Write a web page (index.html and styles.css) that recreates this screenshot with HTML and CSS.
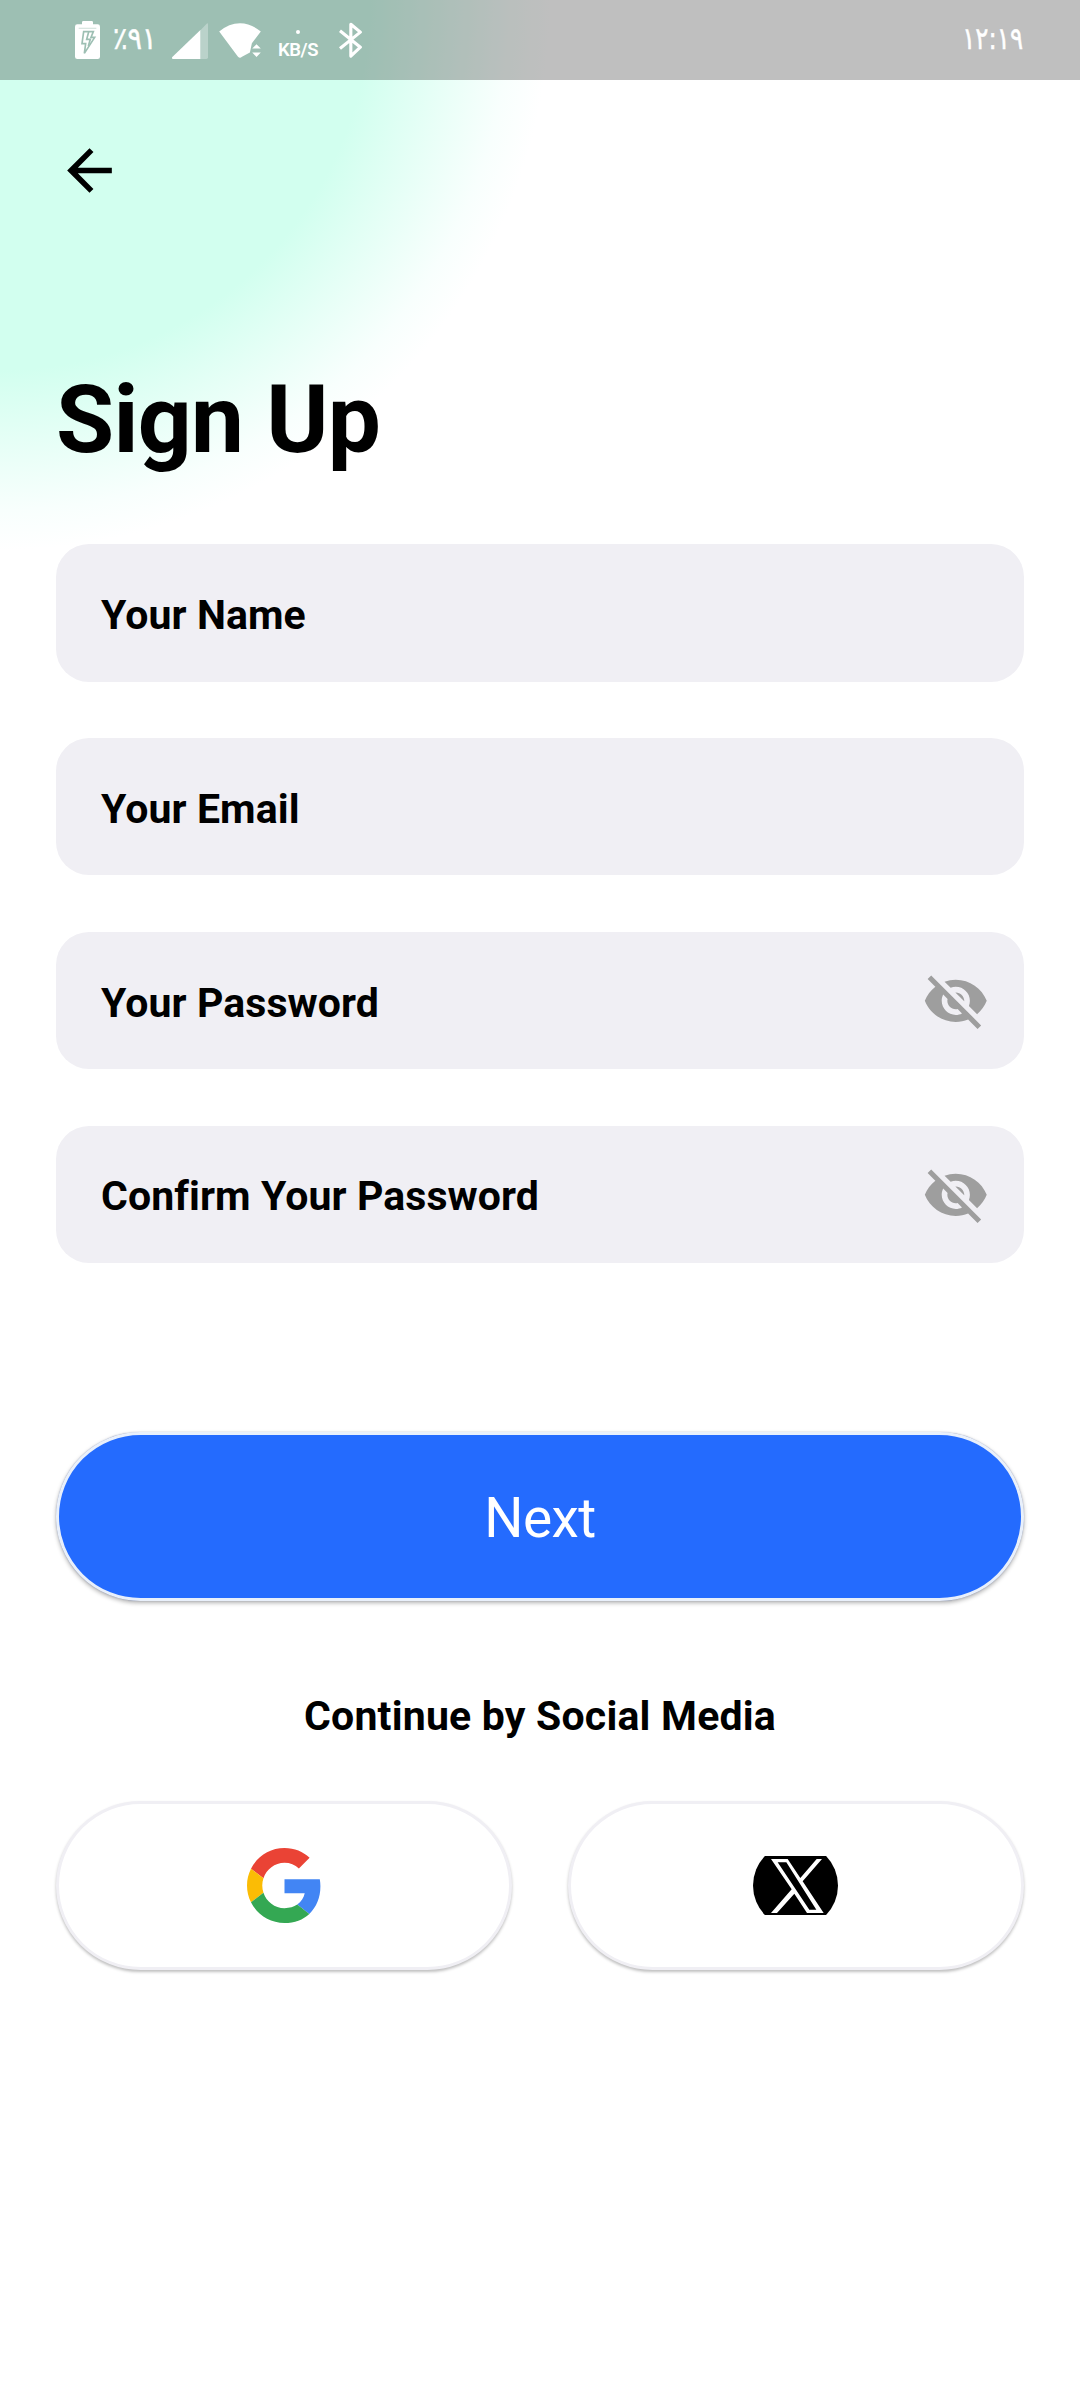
FILE: index.html
```html
<!DOCTYPE html>
<html lang="en">
<head>
<meta charset="utf-8">
<title>Sign Up</title>
<link rel="stylesheet" href="styles.css">
</head>
<body>
<div class="screen">
  <header class="status">
    <svg class="battery" viewBox="45 63 75 114"><path fill="#fff" d="M52 73h14v-6q0-4 4-4h25q4 0 4 4v6h14q7 0 7 7v90q0 7-7 7H52q-7 0-7-7V80q0-7 7-7z"/><path stroke="#d9e6e1" stroke-width="4" d="M56 85h53"/><path fill="none" stroke="#9dbfb3" stroke-width="5" d="M71 95h29l-7 17h11l-31 48 4-29H66z"/><path stroke="#9dbfb3" stroke-width="5" fill="none" d="M86 96l-6 22h11l-6 20"/></svg>
    <span class="percent">٪٩١</span>
    <svg class="signal" viewBox="335 68 109 109"><path fill="#fff" fill-opacity=".3" d="M421 90l19-20q4-3 4 3v99q0 5-5 5h-18z"/><path fill="#fff" d="M421 89v88h-83q-5-2-2-6z"/></svg>
    <svg class="wifi" viewBox="477 68 126 106"><path fill="#fff" d="M477 94q30-25 63-25t63 25l-27 35-6 28-24 13q-6 6-12 0zM577 145l13-13 13 13zM577 157h26l-13 14z"/></svg>
    <span class="speed"><i class="dot"></i>KB/S</span>
    <svg class="bluetooth" viewBox="837 67 70 108"><path fill="none" stroke="#fff" stroke-width="9.5" stroke-linejoin="round" d="M840 93l62 50-29 27V73l29 24-62 50"/></svg>
    <time class="time">١٢:١٩</time>
  </header>
  <main class="content">
    <svg class="back" viewBox="0 0 24 24"><path d="M20 11H7.83l5.59-5.59L12 4l-8 8 8 8 1.41-1.41L7.83 13H20v-2z"/></svg>
    <h1 class="title">Sign Up</h1>
    <div class="fields">
      <div class="field"><span>Your Name</span></div>
      <div class="field"><span>Your Email</span></div>
      <div class="field"><span>Your Password</span><svg class="eye" viewBox="0 0 24 24"><use href="#eye-off"/></svg></div>
      <div class="field"><span>Confirm Your Password</span><svg class="eye" viewBox="0 0 24 24"><path id="eye-off" d="M12 7c2.76 0 5 2.24 5 5 0 .65-.13 1.26-.36 1.83l2.92 2.92c1.51-1.26 2.7-2.89 3.43-4.75-1.73-4.39-6-7.5-11-7.5-1.4 0-2.74.25-3.98.7l2.16 2.16C10.74 7.13 11.35 7 12 7zM2 4.27l2.28 2.28.46.46C3.08 8.3 1.78 10.02 1 12c1.73 4.39 6 7.5 11 7.5 1.55 0 3.03-.3 4.38-.84l.42.42L19.73 22 21 20.73 3.27 3 2 4.27zM7.53 9.8l1.55 1.55c-.05.21-.08.43-.08.65 0 1.66 1.34 3 3 3 .22 0 .44-.03.65-.08l1.55 1.55c-.67.33-1.41.53-2.2.53-2.76 0-5-2.24-5-5 0-.79.2-1.53.53-2.2zm4.31-.78l3.15 3.15.02-.16c0-1.66-1.34-3-3-3l-.17.01z"/></svg></div>
    </div>
    <div class="next"><span>Next</span></div>
    <p class="continue"><span>Continue by Social Media</span></p>
    <div class="socials">
      <div class="social"><svg class="google" viewBox="0 0 48 48"><path fill="#EA4335" d="M24 9.5c3.54 0 6.71 1.22 9.21 3.6l6.85-6.85C35.9 2.38 30.47 0 24 0 14.62 0 6.51 5.38 2.56 13.22l7.98 6.19C12.43 13.72 17.74 9.5 24 9.5z"/><path fill="#4285F4" d="M46.98 24.55c0-1.57-.15-3.09-.38-4.55H24v9.02h12.94c-.58 2.96-2.26 5.48-4.78 7.18l7.73 6c4.51-4.18 7.09-10.36 7.09-17.65z"/><path fill="#FBBC05" d="M10.53 28.59c-.48-1.45-.76-2.99-.76-4.59s.27-3.14.76-4.59l-7.98-6.19C.92 16.46 0 20.12 0 24c0 3.88.92 7.54 2.56 10.78l7.97-6.19z"/><path fill="#34A853" d="M24 48c6.48 0 11.93-2.13 15.89-5.81l-7.73-6c-2.15 1.45-4.92 2.3-8.16 2.3-6.26 0-11.57-4.22-13.47-9.91l-7.98 6.19C6.51 42.62 14.62 48 24 48z"/></svg></div>
      <div class="social"><svg class="x" viewBox="99 228 255 177"><circle cx="226.5" cy="316.5" r="127.5"/><path fill="#fff" fill-rule="evenodd" d="M153 237h50l38 57 49-57h16l-58 67 63 95h-50l-38-58-52 58h-18l62-71zM173 247l95 142h21L199 247z"/></svg></div>
    </div>
  </main>
</div>
</body>
</html>
```
FILE: styles.css
```css
* { box-sizing: border-box; }
body { margin: 0; font-family: Roboto, sans-serif; color: #000; }
svg { display: block; flex: none; }
.screen { width: 1080px; height: 2400px; background: radial-gradient(circle at 0 0, #d2ffef 0, #d2ffef 370px, #e8fff7 450px, #f8fffd 510px, #fff 550px); }
.status { height: 80px; background: rgba(0,0,0,.25); display: flex; align-items: flex-start; padding: 21px 57px 0 75px; color: #fff; }
.battery { width: 25px; height: 38px; }
.percent, .time { font: 31px/34px "DejaVu Sans", sans-serif; direction: ltr; unicode-bidi: bidi-override; letter-spacing: -2px; white-space: nowrap; -webkit-text-stroke: .5px #fff; }
.percent { margin: 0 0 0 13px; width: 45px; transform: scaleX(.87); transform-origin: left; }
.signal { width: 36px; height: 36px; margin: 2px 0 0 14px; }
.wifi { width: 42px; height: 35px; margin: 2px 0 0 11px; }
.speed { width: 40px; margin: 9px 0 0 17px; display: flex; flex-direction: column; align-items: center; font-size: 18.5px; font-weight: 600; line-height: 22px; letter-spacing: -.4px; }
.dot { width: 4px; height: 4px; border-radius: 50%; background: #fff; margin-bottom: 5px; }
.bluetooth { width: 23px; height: 36px; margin: 1px 0 0 21px; }
.time { margin-left: auto; transform: scaleX(.79); transform-origin: right; }
.content { padding: 57px 56px 0; }
.back { width: 67px; height: 67px; }
.title { margin: 160px 0 0; height: 110px; font-size: 94.5px; line-height: 111px; font-weight: 700; letter-spacing: -.7px; white-space: nowrap; }
.fields { margin-top: 70px; display: grid; gap: 56.3px; }
.field { height: 137.6px; border-radius: 33px; background: #f0eff4; display: flex; align-items: center; justify-content: space-between; padding: 0 34px 0 45px; font-size: 41px; font-weight: 700; letter-spacing: .1px; }
.field span { padding-top: 4px; }
.eye { width: 67.6px; height: 67.6px; margin-top: 1px; fill: #9e9e9e; }
.next { margin-top: 168.5px; height: 169px; border-radius: 85px; border: 3px solid #e9f0fb; background: #246bfe; color: #fff; display: flex; align-items: center; justify-content: center; font-size: 55px; letter-spacing: -.6px; box-shadow: 0 0 1px rgba(60,80,140,.5), 0 2px 4px rgba(0,0,0,.3); }
.next span { padding-top: 3px; }
.continue { margin: 85px 0 0; height: 60px; line-height: 60px; text-align: center; font-size: 41px; font-weight: 700; letter-spacing: .2px; }
.socials { margin-top: 55px; display: grid; grid-template-columns: 1fr 1fr; gap: 56px; }
.social { height: 169px; border-radius: 85px; border: 3px solid #f0eff4; background: #fff; display: flex; align-items: center; justify-content: center; box-shadow: 0 2px 3px rgba(0,0,0,.25); }
.google { width: 75px; height: 75px; }
.x { width: 85px; height: 59px; margin-right: 1px; }
```
